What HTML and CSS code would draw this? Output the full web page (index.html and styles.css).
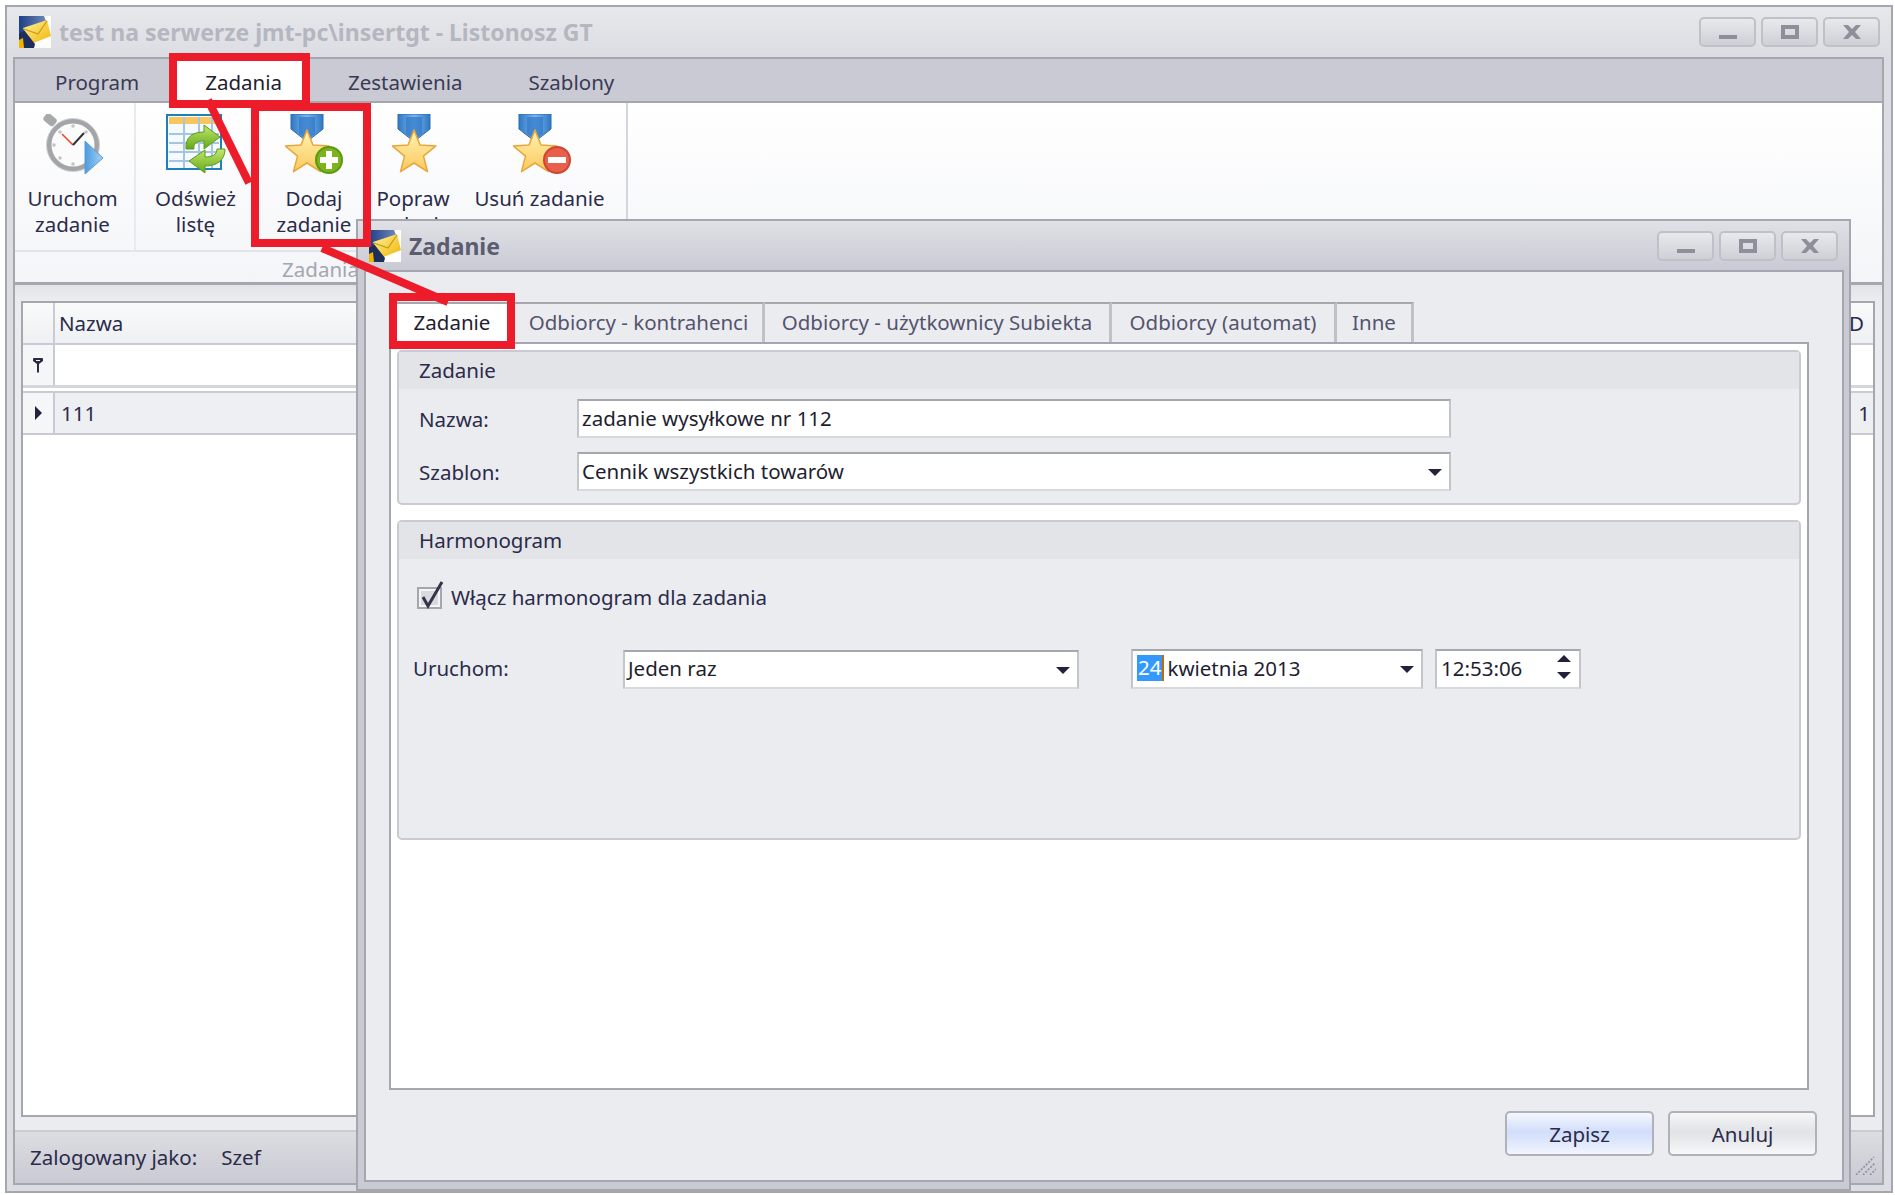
FILE: index.html
```html
<!DOCTYPE html>
<html lang="pl">
  <head>
    <meta charset="UTF-8" />
    <title>Listonosz GT</title>
    <link rel="stylesheet" href="styles.css">
  </head>
  <body>
    <svg class="icon-defs" width="0" height="0">
      <defs>
        <linearGradient id="gradBlue" x1="0" y1="0" x2="1" y2="0">
          <stop offset="0" stop-color="#2f78c4" /><stop offset="0.5" stop-color="#7db4ea" /><stop offset="1" stop-color="#2f78c4" />
        </linearGradient>
        <linearGradient id="gradStar" x1="0" y1="0" x2="0" y2="1">
          <stop offset="0" stop-color="#fff3b4" /><stop offset="1" stop-color="#fbc95c" />
        </linearGradient>
        <linearGradient id="gradPlay" x1="0" y1="0" x2="1" y2="0">
          <stop offset="0" stop-color="#4a9be0" /><stop offset="1" stop-color="#a6d2f4" />
        </linearGradient>
        <linearGradient id="gradGreen" x1="0" y1="0" x2="0" y2="1">
          <stop offset="0" stop-color="#c4e86a" /><stop offset="1" stop-color="#63a81c" />
        </linearGradient>
        <linearGradient id="gradMail" x1="0" y1="0" x2="1" y2="1">
          <stop offset="0" stop-color="#fff2a0" /><stop offset="1" stop-color="#f0b400" />
        </linearGradient>
        <linearGradient id="gradNavy" x1="0" y1="0" x2="1" y2="0">
          <stop offset="0" stop-color="#1f3f86" /><stop offset="1" stop-color="#6f88b8" />
        </linearGradient>
        <symbol id="appIcon" viewBox="0 0 32 32">
          <rect width="32" height="32" fill="#fdfdfd" />
          <path d="M0 0 H25 L27 5 L5 14 L0 20 Z" fill="url(#gradNavy)" />
          <path d="M4 12 L28 4 L32 20 L12 28 Z" fill="url(#gradMail)" />
          <path d="M5 13 L19 18 L28 5" fill="none" stroke="#c89a10" stroke-width="1.2" />
          <path d="M0 18 L5 14 L16 28 L15 32 H0 Z" fill="#1e2e5c" />
          <path d="M0 24 L4 22 L5 32 H0 Z" fill="#f0b400" />
        </symbol>
        <symbol id="medal" viewBox="0 0 46 60">
          <path d="M6 0 H38 V15 L24 26 H20 L6 15 Z" fill="url(#gradBlue)" stroke="#2a6cb4" stroke-width="1" />
          <path d="M14 3 H30 V20 L22 26 L14 20 Z" fill="#2f78c8" opacity="0.7" />
          <path d="M22 16 L27.9 30.9 L43.9 31.9 L31.5 42.1 L35.5 57.6 L22 49 L8.5 57.6 L12.5 42.1 L0.1 31.9 L16.1 30.9 Z" fill="url(#gradStar)" stroke="#e8a63a" stroke-width="1.5" stroke-linejoin="round" />
        </symbol>
        <symbol id="winMin" viewBox="0 0 20 16"><rect x="1" y="11" width="18" height="4" fill="#8e8f9a" /></symbol>
        <symbol id="winMax" viewBox="0 0 20 16"><path d="M1 1 H19 V15 H1 Z M5 5 V11 H15 V5 Z" fill-rule="evenodd" fill="#8e8f9a" /></symbol>
        <symbol id="winClose" viewBox="0 0 20 16"><path d="M1 1 H6 L10 5 L14 1 H19 L13 8 L19 15 H14 L10 11 L6 15 H1 L7 8 Z" fill="#8e8f9a" /></symbol>
      </defs>
    </svg>

    <div class="window">
      <div class="titlebar">
        <svg class="app-icon"><use href="#appIcon" /></svg>
        <span class="title-main">test na serwerze jmt-pc\insertgt - Listonosz GT</span>
        <div class="win-buttons">
          <div class="win-btn"><svg><use href="#winMin" /></svg></div>
          <div class="win-btn"><svg><use href="#winMax" /></svg></div>
          <div class="win-btn"><svg><use href="#winClose" /></svg></div>
        </div>
      </div>

      <div class="frame">
        <div class="menu-tabs">
          <span class="menu-tab">Program</span>
          <span class="menu-tab active">Zadania</span>
          <span class="menu-tab">Zestawienia</span>
          <span class="menu-tab">Szablony</span>
        </div>

        <div class="ribbon">
          <div class="ribbon-group">
            <div class="ribbon-items">
              <div class="ribbon-item w-run">
                <svg class="icon-run" viewBox="0 0 61 60">
                  <rect x="2" y="1" width="13" height="9" rx="3" transform="rotate(40 8 5)" fill="#a8a9ad" />
                  <circle cx="31" cy="31" r="24" fill="#fbfbfc" stroke="#a4a5a8" stroke-width="5" />
                  <circle cx="31" cy="31" r="26.5" fill="none" stroke="#d0d1d4" stroke-width="1" />
                  <g fill="#c4c5c9">
                    <circle cx="31" cy="12" r="1.8" /><circle cx="31" cy="50" r="1.8" /><circle cx="12" cy="31" r="1.8" />
                    <circle cx="18" cy="18" r="1.8" /><circle cx="18" cy="44" r="1.8" /><circle cx="44" cy="18" r="1.8" />
                  </g>
                  <path d="M31 31 L20 20" stroke="#ea4a2c" stroke-width="1.6" />
                  <path d="M31 31 L42 19" stroke="#333" stroke-width="2" />
                  <path d="M43 27 L61 44 L43 60 Z" fill="url(#gradPlay)" stroke="#5c9ad0" stroke-width="1" />
                </svg>
                <span>Uruchom<br />zadanie</span>
              </div>
              <div class="ribbon-item w-refresh">
                <svg class="icon-refresh" viewBox="0 0 60 60">
                  <rect x="1" y="1" width="54" height="54" fill="#f4fafe" stroke="#1f7fb8" stroke-width="2" />
                  <rect x="3" y="3" width="50" height="7" fill="#f8c65c" />
                  <path d="M3 20 H53 M3 29 H53 M3 38 H53 M3 47 H53 M18 3 V54 M33 3 V54 M46 3 V54" stroke="#a4c4e0" stroke-width="2" />
                  <path d="M20 35 C19 23 27 18 38 18 V11 L54 23 L38 35 V27 C31 27 27 29 28 35 Z" fill="url(#gradGreen)" stroke="#5b9a20" stroke-width="1" />
                  <path d="M59 35 C59 47 50 52 39 52 V59 L23 47 L39 36 V43 C46 43 51 41 51 35 Z" fill="url(#gradGreen)" stroke="#5b9a20" stroke-width="1" />
                </svg>
                <span>Odśwież<br />listę</span>
              </div>
              <div class="ribbon-item w-add">
                <svg class="icon-medal" viewBox="0 0 60 60">
                  <use href="#medal" width="46" height="60" />
                  <circle cx="44" cy="46" r="13" fill="#7db31c" stroke="#5b9a10" stroke-width="2" />
                  <path d="M41 37 H47 V43 H53 V49 H47 V55 H41 V49 H35 V43 H41 Z" fill="#fff" />
                </svg>
                <span>Dodaj<br />zadanie</span>
              </div>
              <div class="ribbon-item w-edit">
                <svg class="icon-medal-plain" viewBox="0 0 46 60"><use href="#medal" width="46" height="60" /></svg>
                <span>Popraw<br />zadanie</span>
              </div>
              <div class="ribbon-item w-del">
                <svg class="icon-medal icon-medal-del" viewBox="0 0 60 60">
                  <use href="#medal" width="46" height="60" />
                  <circle cx="44" cy="46" r="13" fill="#e8604c" stroke="#d04434" stroke-width="2" />
                  <rect x="35" y="43" width="18" height="6" fill="#fff" />
                </svg>
                <span>Usuń zadanie</span>
              </div>
            </div>
            <div class="ribbon-label">Zadania</div>
          </div>
        </div>

        <div class="workspace">
          <div class="grid">
            <div class="grid-head">
              <div class="row-cell"></div>
              <div class="name-cell head-text">Nazwa</div>
              <div class="last-cell">D</div>
            </div>
            <div class="grid-filter">
              <div class="row-cell">
                <svg class="pin" viewBox="0 0 10 15"><path d="M0 1 Q0 0 1 0 H9 Q10 0 10 1 V3 L6 6 V14 L5 15 L4 14 V6 L0 3 Z M3 2 V3 H7 V2 Z" fill-rule="evenodd" fill="#2a2a44" /></svg>
              </div>
            </div>
            <div class="grid-gap"></div>
            <div class="grid-row">
              <div class="row-cell"><div class="row-arrow"></div></div>
              <div class="name-cell row-text">111</div>
              <div class="last-cell last-num">1</div>
            </div>
          </div>
        </div>

        <div class="statusbar">
          <span class="status-label">Zalogowany jako:</span>
          <span>Szef</span>
          <svg class="grip" viewBox="0 0 22 20">
            <path d="M2 20 L20 2 M9 20 L21 8 M16 20 L22 14" stroke="#8e8f9a" stroke-width="1.6" stroke-dasharray="2 1.5" />
          </svg>
        </div>
      </div>
    </div>

    <div class="dialog">
      <div class="dialog-title">
        <svg class="dialog-icon"><use href="#appIcon" /></svg>
        <span class="title-dialog">Zadanie</span>
        <div class="win-buttons">
          <div class="win-btn"><svg><use href="#winMin" /></svg></div>
          <div class="win-btn"><svg><use href="#winMax" /></svg></div>
          <div class="win-btn"><svg><use href="#winClose" /></svg></div>
        </div>
      </div>
      <div class="dialog-body">
        <div class="tabs">
          <div class="tab active">Zadanie</div>
          <div class="tab t2">Odbiorcy - kontrahenci</div>
          <div class="tab t3">Odbiorcy - użytkownicy Subiekta</div>
          <div class="tab t4">Odbiorcy (automat)</div>
          <div class="tab t5">Inne</div>
        </div>
        <div class="tab-page">
          <div class="group group-task">
            <div class="group-head">Zadanie</div>
            <div class="form-grid">
              <span>Nazwa:</span>
              <div class="field">zadanie wysyłkowe nr 112</div>
              <span>Szablon:</span>
              <div class="field">Cennik wszystkich towarów<div class="drop-arrow"></div></div>
            </div>
          </div>
          <div class="group group-plan">
            <div class="group-head">Harmonogram</div>
            <div class="check-row">
              <svg class="checkbox" viewBox="0 0 27 28">
                <rect x="1" y="7" width="23" height="20" fill="#f4f4f6" stroke="#a5a6ae" stroke-width="2" />
                <rect x="4" y="10" width="17" height="14" fill="#d9dae0" />
                <path d="M6 16 L11 25 L25 1" fill="none" stroke="#33354a" stroke-width="3" />
              </svg>
              <span>Włącz harmonogram dla zadania</span>
            </div>
            <div class="run-row">
              <span class="run-label">Uruchom:</span>
              <div class="field combo">Jeden raz<div class="drop-arrow"></div></div>
              <div class="field date"><span class="date-day">24</span>kwietnia 2013<div class="drop-arrow"></div></div>
              <div class="field time">12:53:06
                <div class="spin"><div class="spin-up"></div><div class="spin-down"></div></div>
              </div>
            </div>
          </div>
        </div>
        <div class="dialog-footer">
          <div class="btn btn-primary">Zapisz</div>
          <div class="btn">Anuluj</div>
        </div>
      </div>
    </div>

    <!-- red annotations drawn over the screenshot -->
    <svg class="marks" viewBox="0 0 1895 1195">
      <path d="M208 100 L249 183" class="mark-line" />
      <path d="M322 248 L448 302" class="mark-line" />
      <rect x="173" y="57" width="133" height="47" class="mark-box" />
      <rect x="255" y="107" width="112" height="136" class="mark-box" />
      <rect x="393" y="297" width="118" height="48" class="mark-box" />
    </svg>
  </body>
</html>
```

FILE: styles.css
```css
body {
  margin: 0;
  width: 1895px;
  height: 1195px;
  overflow: hidden;
  position: relative;
  background-color: #fff;
  font-family: "Noto Sans", sans-serif;
  font-size: 20.5px;
  color: #2b2b4a;
}
.icon-defs {
  position: absolute;
}

/* main window */
.window {
  box-sizing: border-box;
  width: 1888px;
  height: 1188px;
  margin: 5px 0 0 5px;
  padding: 0 7px 6px 6px;
  border: 2px solid #a5a6ae;
  background-color: #dcdde2;
  display: flex;
  flex-direction: column;
}
.titlebar {
  height: 50px;
  flex: none;
  display: flex;
  align-items: center;
  background: linear-gradient(#e6e8ec, #dcdde2);
  margin: 0 -7px 0 -6px;
  padding-left: 12px;
  padding-right: 11px;
}
.app-icon {
  width: 32px;
  height: 32px;
  margin-right: 8px;
}
.title-main {
  font-weight: bold;
  font-size: 23px;
  color: #b4b6c0;
  flex: 1;
}
.win-buttons {
  display: flex;
  gap: 5px;
}
.win-btn {
  box-sizing: border-box;
  width: 57px;
  height: 30px;
  border: 2px solid #c0c1c8;
  border-radius: 5px;
  background: linear-gradient(#e8e9ec, #cfd0d6);
  display: flex;
  align-items: center;
  justify-content: center;
}
.win-btn svg {
  width: 20px;
  height: 16px;
}
.frame {
  flex: 1;
  display: flex;
  flex-direction: column;
  border: 2px solid #a5a6ae;
  min-height: 0;
}

/* menu and ribbon */
.menu-tabs {
  height: 42px;
  flex: none;
  display: flex;
  gap: 2px;
  padding-left: 8px;
  background-color: #c9cad3;
  border-bottom: 2px solid #a5a6ae;
}
.menu-tab {
  padding: 0 32px;
  line-height: 47px;
  color: #3a3a55;
}
.menu-tab.active {
  background-color: #fff;
  margin-bottom: -2px;
  padding-right: 24px;
  margin-right: 8px;
  color: #1e1e30;
}
.ribbon {
  height: 182px;
  flex: none;
  box-sizing: border-box;
  border-bottom: 3px solid #a5a6ae;
  background: linear-gradient(#fff, #f4f5f8);
}
.ribbon-group {
  box-sizing: border-box;
  width: 613px;
  height: 100%;
  border-right: 2px solid #d5d6dc;
  display: flex;
  flex-direction: column;
}
.ribbon-items {
  height: 147px;
  flex: none;
  display: flex;
  border-bottom: 2px solid #e4e5e9;
}
.ribbon-item {
  display: flex;
  flex-direction: column;
  align-items: center;
  padding-top: 11px;
  box-sizing: border-box;
  line-height: 26px;
  text-align: center;
}
.ribbon-item svg {
  height: 60px;
  margin-bottom: 11px;
  flex: none;
}
.w-run { width: 121px; border-right: 2px solid #e9eaee; padding-right: 4px; }
.w-refresh { width: 119px; }
.w-add { width: 118px; }
.w-edit { width: 80px; }
.w-del { width: 173px; white-space: nowrap; }
.icon-run { width: 61px; }
.icon-refresh { width: 60px; }
.icon-medal { width: 60px; margin-left: 2px; }
.icon-medal-del { margin-left: 6px; }
.icon-medal-plain { width: 46px; margin-left: 4px; }
.ribbon-label {
  flex: 1;
  text-align: center;
  line-height: 34px;
  color: #a4a6b0;
}

/* grid behind the dialog */
.workspace {
  flex: 1;
  display: flex;
  padding: 16px 7px 13px 6px;
  background: linear-gradient(#e2e3e8, #ebecf0 14px);
  min-height: 0;
}
.grid {
  flex: 1;
  border: 2px solid #a5a6ae;
  background-color: #fff;
}
.grid-head,
.grid-filter,
.grid-row {
  display: flex;
  height: 40px;
  border-bottom: 2px solid #c9cad3;
}
.grid-head {
  background: linear-gradient(#f9fafa, #eff0f3);
}
.grid-filter {
  border-bottom: 3px solid #d5d6dc;
}
.grid-gap {
  height: 3px;
  border-bottom: 2px solid #c9cad3;
}
.grid-row {
  background-color: #eeeff2;
}
.row-cell {
  width: 30px;
  flex: none;
  border-right: 2px solid #c9cad3;
  background-color: #f5f6f8;
  display: flex;
  align-items: center;
  justify-content: center;
}
.grid-head .row-cell {
  background: none;
}
.name-cell {
  flex: 1;
  line-height: 40px;
}
.head-text {
  padding-left: 4px;
}
.row-text {
  padding-left: 6px;
}
.last-cell {
  width: 24px;
  flex: none;
  line-height: 40px;
}
.last-num {
  box-sizing: border-box;
  text-align: right;
  padding-right: 3px;
}
.pin {
  width: 10px;
  height: 15px;
}
.row-arrow {
  border-left: 7px solid #22223a;
  border-top: 7px solid transparent;
  border-bottom: 7px solid transparent;
}
.statusbar {
  height: 53px;
  flex: none;
  box-sizing: border-box;
  display: flex;
  align-items: center;
  padding-left: 15px;
  padding-bottom: 2px;
  border-top: 2px solid #c9cad3;
  background: linear-gradient(#dcdde1, #c9cad3);
}
.status-label {
  margin-right: 24px;
}
.grip {
  width: 22px;
  height: 20px;
  margin-left: auto;
  margin-right: 6px;
  margin-top: 16px;
}

/* dialog */
.dialog {
  position: absolute;
  left: 356px;
  top: 219px;
  box-sizing: border-box;
  width: 1495px;
  height: 972px;
  padding: 0 5px 7px 6px;
  border: 2px solid #a5a6ae;
  background-color: #c9cad3;
  display: flex;
  flex-direction: column;
}
.dialog-title {
  height: 49px;
  flex: none;
  display: flex;
  align-items: center;
  margin: 0 -5px 0 -6px;
  padding: 0 11px 0 11px;
  background: linear-gradient(#e0e1e6, #c9cad3);
}
.dialog-icon {
  width: 32px;
  height: 32px;
  margin-right: 8px;
}
.title-dialog {
  flex: 1;
  font-weight: bold;
  font-size: 23px;
  color: #5c5c70;
}
.dialog-body {
  flex: 1;
  display: flex;
  flex-direction: column;
  box-sizing: border-box;
  padding: 30px 33px 0 23px;
  border: 2px solid #a5a6ae;
  background-color: #ebecf0;
  min-height: 0;
}
.tabs {
  height: 40px;
  flex: none;
  display: flex;
}
.tab {
  box-sizing: border-box;
  height: 40px;
  line-height: 37px;
  text-align: center;
  border-top: 2px solid #a5a6ae;
  border-right: 3px solid #c0c1c8;
  color: #54546e;
  background-color: #ebecf0;
}
.tab.active {
  width: 126px;
  background-color: #fff;
  border-right: none;
  color: #1e1e30;
}
.t2 { width: 250px; }
.t3 { width: 347px; }
.t4 { width: 225px; }
.t5 { width: 77px; }
.tab-page {
  flex: 1;
  box-sizing: border-box;
  padding: 6px;
  border: 2px solid #a5a6ae;
  background-color: #fff;
  display: flex;
  flex-direction: column;
  gap: 15px;
}
.group {
  box-sizing: border-box;
  border: 2px solid #c9cad3;
  border-radius: 5px;
  background-color: #ebecf0;
}
.group-task { height: 155px; }
.group-plan { height: 320px; }
.group-head {
  height: 37px;
  line-height: 37px;
  padding-left: 20px;
  background-color: #e3e4e8;
}
.form-grid {
  display: grid;
  grid-template-columns: 178px 874px;
  row-gap: 14px;
  margin-top: 10px;
  align-items: center;
}
.form-grid span {
  padding-left: 20px;
}
.field {
  box-sizing: border-box;
  position: relative;
  height: 39px;
  line-height: 35px;
  padding-left: 3px;
  background-color: #fff;
  border: 2px solid #c4c5cb;
  border-top-color: #a5a6ae;
  border-bottom-color: #d8d9df;
  color: #1e1e30;
}
.drop-arrow {
  position: absolute;
  right: 7px;
  top: 15px;
  border-top: 7px solid #22223a;
  border-left: 7px solid transparent;
  border-right: 7px solid transparent;
}
.check-row {
  display: flex;
  align-items: center;
  gap: 7px;
  margin: 23px 0 0 18px;
  height: 30px;
}
.checkbox {
  width: 27px;
  height: 28px;
  margin-top: -4px;
}
.run-row {
  display: flex;
  align-items: center;
  margin: 37px 0 0 14px;
  line-height: 26px;
}
.run-label {
  width: 210px;
  margin-top: -2px;
}
.combo {
  width: 456px;
  margin-right: -1px;
  line-height: 33px;
}
.date {
  width: 292px;
  height: 40px;
  margin-left: 53px;
  display: flex;
  padding-left: 4px;
  line-height: 34px;
}
.date-day {
  background-color: #3399ff;
  color: #fff;
  border-right: 2px solid #c56a00;
  height: 26px;
  line-height: 24px;
  margin-top: 4px;
  padding: 0 1px;
  margin-right: 3px;
}
.time {
  width: 146px;
  height: 40px;
  margin-left: 12px;
  padding-left: 4px;
  line-height: 34px;
}
.spin {
  position: absolute;
  right: 8px;
  top: 4px;
  display: flex;
  flex-direction: column;
  gap: 10px;
}
.spin-up {
  border-bottom: 7px solid #22223a;
  border-left: 7px solid transparent;
  border-right: 7px solid transparent;
}
.spin-down {
  border-top: 7px solid #22223a;
  border-left: 7px solid transparent;
  border-right: 7px solid transparent;
}
.dialog-footer {
  height: 90px;
  flex: none;
  display: flex;
  justify-content: flex-end;
  gap: 14px;
  padding: 21px 0 0;
  box-sizing: border-box;
  margin-right: -8px;
}
.btn {
  box-sizing: border-box;
  width: 149px;
  height: 45px;
  line-height: 42px;
  text-align: center;
  border: 2px solid #b0b1b9;
  border-radius: 5px;
  background: linear-gradient(#f6f6f8, #e2e3e6 45%, #e6e7ea 60%, #f8f8fa);
}
.btn-primary {
  background: linear-gradient(#f4f7fe, #d2defa 45%, #d8e3fb 60%, #f2f5fe);
}

/* red marks */
.marks {
  position: absolute;
  left: 0;
  top: 0;
  width: 1895px;
  height: 1195px;
  pointer-events: none;
}
.mark-box {
  fill: none;
  stroke: #ed1c2a;
  stroke-width: 8;
}
.mark-line {
  fill: none;
  stroke: #ed1c2a;
  stroke-width: 8;
}
```
